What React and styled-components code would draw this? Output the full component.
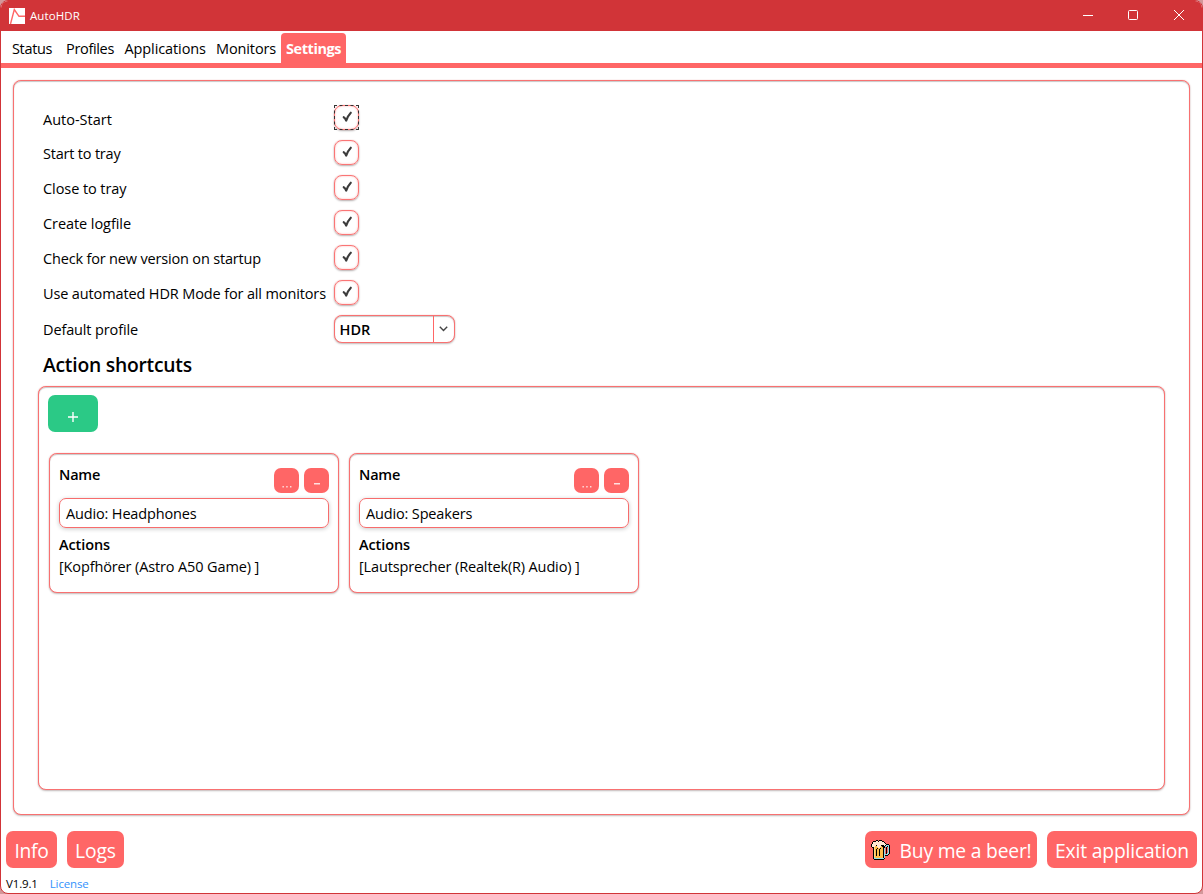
import React from 'react';
import styled, { createGlobalStyle } from 'styled-components';

const accent = '#ff6666';
const titleRed = '#d13438';

const GlobalStyle = createGlobalStyle`
  * { box-sizing: border-box; }
  body { margin: 0; background: #d3979a; }
  button, input { font: inherit; margin: 0; }
`;

const Window = styled.div`
  width: 1203px;
  height: 894px;
  display: flex;
  flex-direction: column;
  overflow: hidden;
  border: 1px solid ${titleRed};
  border-radius: 8px;
  background: #fff;
  color: #000;
  font: 14.5px/20px "Open Sans", "Noto Sans", sans-serif;
`;

const Text = styled.span`
  letter-spacing: ${(p) => p.$ls || 0}px;
  white-space: pre;
`;

const TitleBar = styled.header`
  flex: 0 0 30px;
  display: flex;
  align-items: center;
  padding-left: 8px;
  background: ${titleRed};
  color: #fff;
  font-size: 11.5px;
`;
const AppTitle = styled.div`
  flex: 1;
  margin: 0 0 1px 5px;
`;
const CaptionButton = styled.button`
  width: 46px;
  height: 30px;
  padding: 0 0 2px;
  border: 0;
  display: flex;
  align-items: center;
  justify-content: center;
  background: transparent;
  color: #fff;
`;

const Tabs = styled.nav`
  flex: 0 0 37px;
  display: flex;
  align-items: flex-end;
  padding-left: 6px;
  border-bottom: 5px solid ${accent};
`;
const Tab = styled.a`
  width: ${(p) => p.$w}px;
  height: 30px;
  padding-left: 5px;
  line-height: 31px;
  border-radius: 4px 4px 0 0;
  background: ${(p) => (p.$active ? accent : 'transparent')};
  color: ${(p) => (p.$active ? '#fff' : '#000')};
  font-weight: ${(p) => (p.$active ? 700 : 400)};
`;

const framed = `
  border: 1px solid #f87171;
  background: #fff;
  box-shadow: 0 0 1px rgba(255, 102, 102, 0.6), 0 1px 2px rgba(0, 0, 0, 0.25), inset 0 1px 1px rgba(0, 0, 0, 0.22);
`;
const SettingsPanel = styled.main`
  ${framed}
  flex: 0 0 735px;
  margin: 12px 12px 0;
  padding: 19px 24px 24px;
  display: flex;
  flex-direction: column;
  border-radius: 8px;
`;
const SettingRow = styled.div`
  flex: 0 0 35px;
  display: grid;
  grid-template-columns: 291px auto;
  align-items: center;
  padding-left: 5px;
`;
const SettingLabel = styled.label`
  padding-top: ${(p) => (p.$low ? 4 : 2)}px;
`;
const CheckBox = styled.div`
  position: relative;
  width: 25px;
  height: 25px;
  display: flex;
  align-items: center;
  justify-content: center;
  padding: 0 0 1px 1px;
  border: 1px solid #fa7575;
  border-radius: 8px;
  box-shadow: 0 0 1px rgba(255, 102, 102, 0.5), 0 1px 2px rgba(0, 0, 0, 0.3),
    inset 0 0 2px rgba(255, 80, 80, 0.45);
  &::after {
    content: '';
    display: ${(p) => (p.$focused ? 'block' : 'none')};
    position: absolute;
    inset: -1px;
    border: 1px dashed #333;
  }
`;
const ProfileRow = styled(SettingRow)`
  flex-basis: 37px;
`;
const Select = styled.div`
  ${framed}
  width: 120.5px;
  height: 28px;
  display: flex;
  border-radius: 8px;
  font-weight: 600;
`;
const SelectValue = styled.div`
  width: 99px;
  padding-left: 4.5px;
  line-height: 27px;
  border-right: 1px solid ${accent};
`;
const SelectArrow = styled.div`
  flex: 1;
  display: flex;
  align-items: center;
  justify-content: center;
`;

const SectionTitle = styled.h2`
  flex: 0 0 38.5px;
  margin: 0;
  padding: 4px 0 0 5px;
  font-size: 19.3px;
  line-height: 28px;
  font-weight: 600;
`;
const ShortcutsPanel = styled.section`
  ${framed}
  flex: 1;
  padding: 8.5px 9px;
  border-radius: 8px;
`;
const AddButton = styled.button`
  display: block;
  width: 50px;
  height: 37px;
  padding: 6px 0 0;
  border: 0;
  border-radius: 7px;
  background: #2bc986;
  color: #fff;
`;
const Cards = styled.div`
  display: flex;
  gap: 10px;
  padding: 21px 0 0 1px;
`;
const Card = styled.article`
  ${framed}
  width: 290px;
  height: 140px;
  padding: 10px 9px;
  border-radius: 8px;
`;
const CardHeader = styled.div`
  display: flex;
  gap: 5px;
  height: 34px;
`;
const Caption = styled.div`
  flex: 1;
  font-weight: 600;
`;
const HeaderCaption = styled(Caption)`
  padding-top: 1px;
`;
const SmallButton = styled.button`
  width: 25px;
  height: 25px;
  margin-top: 4px;
  padding: ${(p) => p.$drop}px 0 0;
  border: 0;
  border-radius: 7px;
  display: flex;
  justify-content: center;
  align-items: center;
  background: ${accent};
  color: #fff;
`;
const NameField = styled.div`
  height: 30px;
  padding-left: 6px;
  line-height: 29px;
  border: 1px solid #f76c6c;
  border-radius: 7px;
  box-shadow: 0 1px 4px rgba(0, 0, 0, 0.22);
  margin-bottom: 7px;
`;
const ActionLine = styled.div`
  padding-top: 2px;
`;

const ButtonBar = styled.div`
  display: flex;
  gap: 10px;
  padding: 16px 5px 0;
`;
const BarButton = styled.button`
  width: ${(p) => p.$w}px;
  height: 37px;
  padding: 3px 0 0;
  border: 0;
  border-radius: 7px;
  display: flex;
  align-items: center;
  justify-content: center;
  gap: 10px;
  background: ${accent};
  color: #fff;
  font-size: 19.3px;
`;
const BeerSlot = styled.span`
  display: flex;
  padding-bottom: 3px;
`;
const Spacer = styled.div`
  flex: 1;
`;
const StatusLine = styled.footer`
  display: flex;
  gap: 12px;
  padding: 6px 5px 0;
  font-size: 11.5px;
`;
const Link = styled.a`
  color: #3492fc;
`;

const Logo = () => (
  <svg width="16" height="16" viewBox="0 0 16 16">
    <rect width="16" height="16" fill="#fff" />
    <path d="M1.5 16 5.3 1.5 10 8.3H16" fill="none" stroke={accent} strokeWidth="1.4" />
  </svg>
);

const Check = () => (
  <svg width="11" height="12" viewBox="0 0 11 12">
    <path d="M1.7 6.2Q3.2 7 4.2 9.6Q5.8 4.8 8.8 1.7" fill="none" stroke="#3c3c3c" strokeWidth="2.1" strokeLinecap="round" strokeLinejoin="round" />
  </svg>
);

const beerColors = { k: '#000', c: '#ffe6d2', o: '#ffbd4a', y: '#ffda85', b: '#92dbe5' };
const beerPixels = [
  '.....kk.kkk........',
  '..kkkcckccckk......',
  '.kccccccccccck.....',
  '.kcccccccccccck....',
  'kcccccccccccccckkk.',
  'kcccckcccckkkckbbbk',
  'kcccooccccokkkbbkbk',
  '.kkyoooccoookk.k.bk',
  '..kyookookookb.k.bk',
  '..kyokookoookb.k.bk',
  '..kyokookoookb.k.bk',
  '..kyokookoookb.k.bk',
  '..kyokookoookb.k.bk',
  '..kyokookoookb.kbbk',
  '..kyokookoookbbbbk.',
  '..kyokookoookbkkk..',
  '..kyooooooookb.....',
  '..kbooooooookb.....',
  '..kbbbbbbbbbbk.....',
  '...kkkkkkkkkk......',
];
const BeerIcon = () => (
  <svg width="19" height="20" viewBox="0 0 19 20" shapeRendering="crispEdges">
    {beerPixels.flatMap((row, y) =>
      [...row].map((c, x) => (c === '.' ? null : (
        <rect key={`${x}-${y}`} x={x} y={y} width="1" height="1" fill={beerColors[c]} />
      )))
    )}
  </svg>
);

const tabs = [
  ['Status', 54, -0.35],
  ['Profiles', 58.5, -0.33],
  ['Applications', 91.5, -0.1],
  ['Monitors', 70, -0.12],
  ['Settings', 65, -0.43],
];

const options = [
  ['Auto-Start', 0],
  ['Start to tray', -0.2],
  ['Close to tray', -0.07],
  ['Create logfile', -0.07],
  ['Check for new version on startup', -0.17],
  ['Use automated HDR Mode for all monitors', -0.13],
];

const shortcuts = [
  { name: 'Audio: Headphones', action: '[Kopfhörer (Astro A50 Game) ]', ls: -0.13 },
  { name: 'Audio: Speakers', action: '[Lautsprecher (Realtek(R) Audio) ]', ls: -0.14 },
];

export default function App() {
  return (
    <>
      <GlobalStyle />
      <Window>
        <TitleBar>
          <Logo />
          <AppTitle><Text $ls={0.1}>AutoHDR</Text></AppTitle>
          <CaptionButton aria-label="Minimize">
            <svg width="12" height="10"><path d="M2 5.5h10" stroke="currentColor" /></svg>
          </CaptionButton>
          <CaptionButton aria-label="Maximize">
            <svg width="10" height="10"><rect x=".5" y=".5" width="9" height="9" rx="1" fill="none" stroke="currentColor" /></svg>
          </CaptionButton>
          <CaptionButton aria-label="Close">
            <svg width="10" height="10"><path d="M0 0l10 10M10 0 0 10" stroke="currentColor" /></svg>
          </CaptionButton>
        </TitleBar>
        <Tabs>
          {tabs.map(([name, w, ls]) => (
            <Tab key={name} $w={w} $active={name === 'Settings'}><Text $ls={ls}>{name}</Text></Tab>
          ))}
        </Tabs>
        <SettingsPanel>
          {options.map(([label, ls], i) => (
            <SettingRow key={label}>
              <SettingLabel $low={i === 0}><Text $ls={ls}>{label}</Text></SettingLabel>
              <CheckBox $focused={i === 0}><Check /></CheckBox>
            </SettingRow>
          ))}
          <ProfileRow>
            <SettingLabel><Text $ls={-0.13}>Default profile</Text></SettingLabel>
            <Select>
              <SelectValue>HDR</SelectValue>
              <SelectArrow>
                <svg width="9" height="6"><path d="M.8.8 4.5 4.5 8.2.8" fill="none" stroke="#444" strokeWidth="1.4" /></svg>
              </SelectArrow>
            </Select>
          </ProfileRow>
          <SectionTitle><Text $ls={-0.23}>Action shortcuts</Text></SectionTitle>
          <ShortcutsPanel>
            <AddButton aria-label="Add">
              <svg width="10" height="10"><path d="M0 5h10M5 0v10" stroke="#fff" strokeWidth="1.4" /></svg>
            </AddButton>
            <Cards>
              {shortcuts.map((s) => (
                <Card key={s.name}>
                  <CardHeader>
                    <HeaderCaption><Text $ls={-0.2}>Name</Text></HeaderCaption>
                    <SmallButton $drop={13} aria-label="Edit">
                      <svg width="10" height="2"><path d="M.5 0h1.3v1.5H.5zM4.3 0h1.3v1.5H4.3zM8.1 0h1.3v1.5H8.1z" fill="#fff" opacity=".85" /></svg>
                    </SmallButton>
                    <SmallButton $drop={7} aria-label="Remove">
                      <svg width="6" height="2"><path d="M0 .8h6" stroke="#fff" strokeWidth="1.2" /></svg>
                    </SmallButton>
                  </CardHeader>
                  <NameField><Text $ls={-0.15}>{s.name}</Text></NameField>
                  <Caption><Text $ls={-0.1}>Actions</Text></Caption>
                  <ActionLine><Text $ls={s.ls}>{s.action}</Text></ActionLine>
                </Card>
              ))}
            </Cards>
          </ShortcutsPanel>
        </SettingsPanel>
        <ButtonBar>
          <BarButton $w={51}><Text $ls={-0.3}>Info</Text></BarButton>
          <BarButton $w={57}><Text $ls={-0.1}>Logs</Text></BarButton>
          <Spacer />
          <BarButton $w={172}><BeerSlot><BeerIcon /></BeerSlot><Text $ls={-0.2}>Buy me a beer!</Text></BarButton>
          <BarButton $w={150}><Text $ls={-0.18}>Exit application</Text></BarButton>
        </ButtonBar>
        <StatusLine>
          <Text $ls={-0.15}>V1.9.1</Text>
          <Link><Text $ls={-0.13}>License</Text></Link>
        </StatusLine>
      </Window>
    </>
  );
}
